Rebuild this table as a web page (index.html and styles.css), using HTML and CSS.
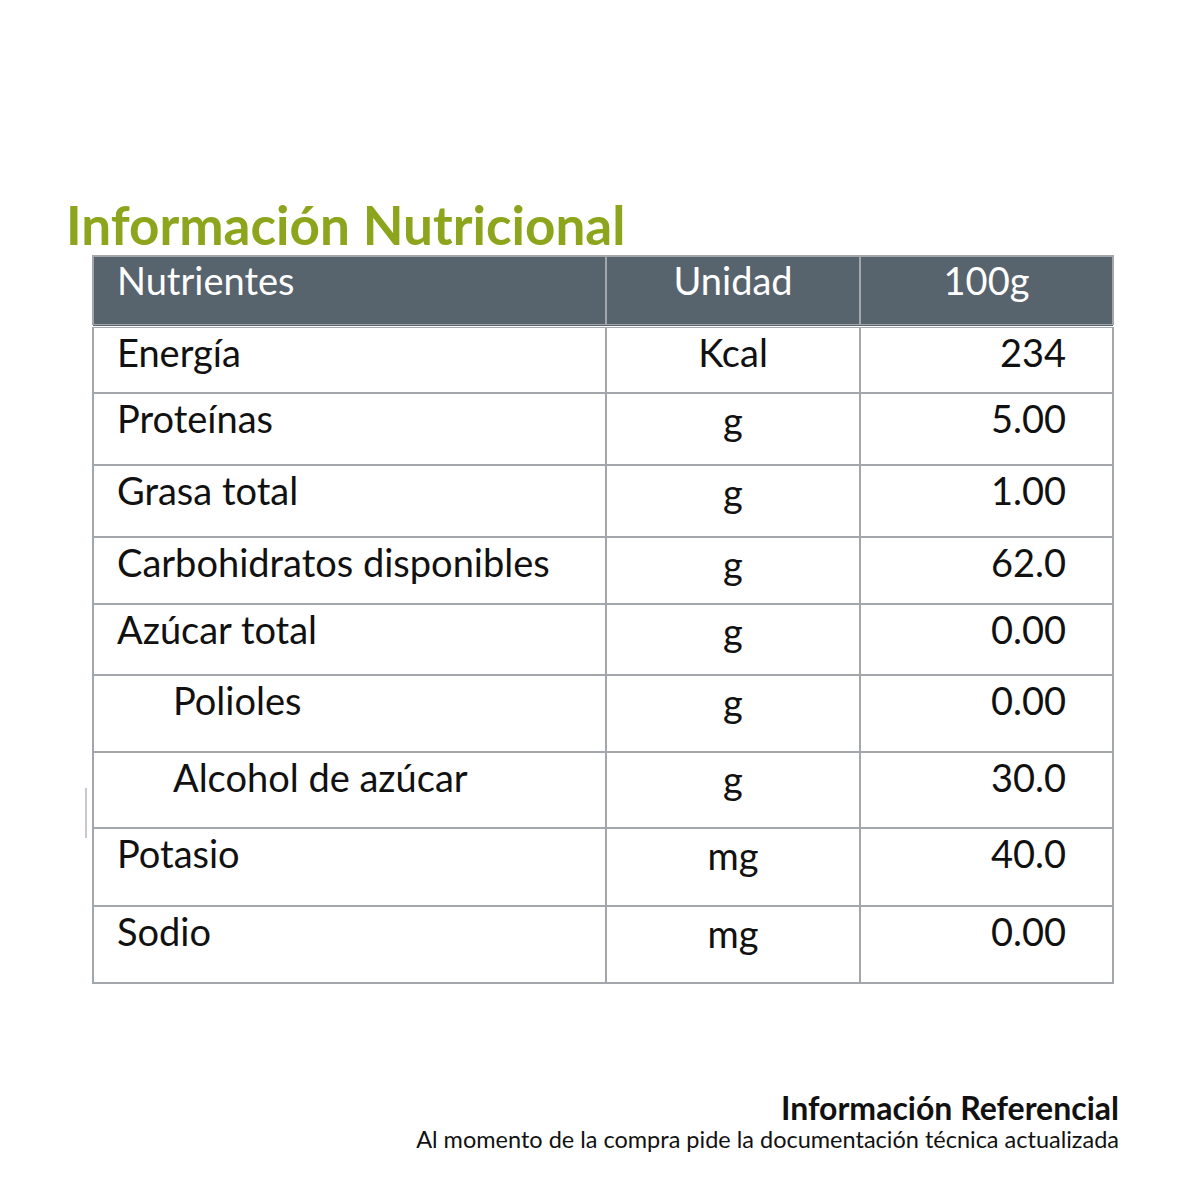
FILE: index.html
```html
<!DOCTYPE html>
<html lang="es">
<head>
<meta charset="utf-8">
<title>Información Nutricional</title>
<link rel="stylesheet" href="styles.css">
</head>
<body>
<main class="page">
  <h1 class="title">Información Nutricional</h1>
  <div class="table-wrap">
    <span class="artifact"></span>
    <table class="nut">
      <thead>
        <tr>
          <th class="c-name">Nutrientes</th>
          <th class="c-unit">Unidad</th>
          <th class="c-val">100g</th>
        </tr>
      </thead>
      <tbody>
        <tr class="r1"><td class="c-name">Energía</td><td class="c-unit">Kcal</td><td class="c-val">234</td></tr>
        <tr class="r2"><td class="c-name">Proteínas</td><td class="c-unit low">g</td><td class="c-val">5.00</td></tr>
        <tr class="r3"><td class="c-name">Grasa total</td><td class="c-unit low">g</td><td class="c-val">1.00</td></tr>
        <tr class="r4"><td class="c-name">Carbohidratos disponibles</td><td class="c-unit low">g</td><td class="c-val">62.0</td></tr>
        <tr class="r5"><td class="c-name">Azúcar total</td><td class="c-unit low">g</td><td class="c-val">0.00</td></tr>
        <tr class="r6"><td class="c-name indent">Polioles</td><td class="c-unit low">g</td><td class="c-val">0.00</td></tr>
        <tr class="r7"><td class="c-name indent">Alcohol de azúcar</td><td class="c-unit low">g</td><td class="c-val">30.0</td></tr>
        <tr class="r8"><td class="c-name">Potasio</td><td class="c-unit low">mg</td><td class="c-val">40.0</td></tr>
        <tr class="r9"><td class="c-name">Sodio</td><td class="c-unit low">mg</td><td class="c-val">0.00</td></tr>
      </tbody>
    </table>
  </div>
  <footer class="foot">
    <p class="foot-title">Información Referencial</p>
    <p class="foot-text">Al momento de la compra pide la documentación técnica actualizada</p>
  </footer>
</main>
</body>
</html>
```

FILE: styles.css
```css
html, body {
  margin: 0;
  padding: 0;
  background: #ffffff;
}

.page {
  width: 1195px;
  height: 1195px;
  box-sizing: border-box;
  padding: 197px 0 0 0;
  font-family: "Lato", "Open Sans", sans-serif;
  color: #111111;
}

.title {
  margin: 0 0 2px 66px;
  font-size: 53px;
  font-weight: 700;
  color: #8ca51c;
  line-height: 56px;
}

.table-wrap {
  position: relative;
  margin-left: 92px;
  width: 1022px;
}

.artifact {
  position: absolute;
  left: -7px;
  top: 533px;
  width: 2px;
  height: 50px;
  background: #c8c8c8;
}

.nut {
  width: 1022px;
  border-collapse: collapse;
  table-layout: fixed;
  font-size: 38px;
}

.nut th,
.nut td {
  border: 2px solid #a3a7ab;
  vertical-align: top;
  padding: 0;
  line-height: 44px;
  box-sizing: border-box;
}

.nut th {
  background: #57636d;
  color: #ffffff;
  font-weight: 400;
  height: 70px;
  padding-top: 1px;
  border-bottom: 4px double #a3a7ab;
}

.nut .c-name {
  width: 513px;
  text-align: left;
  padding-left: 23px;
}

.nut .c-unit {
  width: 254px;
  text-align: center;
}

.nut .c-val {
  text-align: right;
  padding-right: 46px;
}

.nut th.c-val {
  text-align: center;
  padding-right: 0;
}

.nut td {
  padding-top: 2px;
}

.nut td.low {
  padding-top: 4px;
}

.nut td.indent {
  padding-left: 79px;
}

.r1 { height: 67px; }
.r2 { height: 72px; }
.r3 { height: 72px; }
.r4 { height: 67px; }
.r5 { height: 71px; }
.r6 { height: 77px; }
.r7 { height: 76px; }
.r8 { height: 78px; }
.r9 { height: 77px; }

.foot {
  margin-top: 108px;
  width: 1119px;
  text-align: right;
}

.foot p {
  margin: 0;
}

.foot-title {
  font-size: 32px;
  font-weight: 700;
  line-height: 32px;
  color: #111111;
}

.foot-text {
  font-size: 23.5px;
  line-height: 30px;
  color: #111111;
}
```
